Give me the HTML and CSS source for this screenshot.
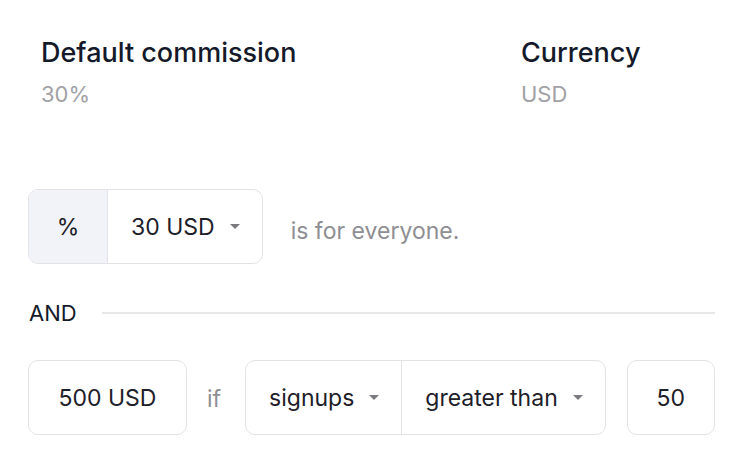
FILE: index.html
```html
<!DOCTYPE html>
<html lang="en">
<head>
  <meta charset="UTF-8">
  <title>Commission</title>
  <link rel="stylesheet" href="styles.css">
</head>
<body>
  <div class="page">
    <div class="summary">
      <div class="field">
        <div class="field-label">Default commission</div>
        <div class="field-value">30%</div>
      </div>
      <div class="field">
        <div class="field-label">Currency</div>
        <div class="field-value">USD</div>
      </div>
    </div>

    <div class="rule-row first">
      <div class="group">
        <div class="cell unit">%</div>
        <div class="cell select">30 USD <span class="caret"></span></div>
      </div>
      <span class="note">is for everyone.</span>
    </div>

    <div class="divider">
      <span class="divider-label">AND</span>
      <span class="divider-line"></span>
    </div>

    <div class="rule-row">
      <div class="group">
        <div class="cell amount">500 USD</div>
      </div>
      <span class="note if">if</span>
      <div class="group">
        <div class="cell select">signups <span class="caret"></span></div>
        <div class="cell select">greater than <span class="caret"></span></div>
      </div>
      <div class="group">
        <div class="cell number">50</div>
      </div>
    </div>
  </div>
</body>
</html>
```

FILE: styles.css
```css
body {
  margin: 0;
  background: #fff;
  font-family: Inter, "Noto Sans", sans-serif;
  color: #1f2023;
}

.page {
  padding: 34px 25px 0 28px;
}

.summary {
  display: grid;
  grid-template-columns: 480px 1fr;
  padding-left: 13px;
}

.field-label {
  font-size: 27px;
  font-weight: 500;
  color: #141a2a;
  line-height: 37px;
}

.field-value {
  margin-top: 9px;
  font-size: 22px;
  color: #a1a1a6;
  line-height: 28px;
}

.rule-row {
  display: flex;
  align-items: center;
  white-space: nowrap;
}

.rule-row.first {
  margin-top: 81px;
}

.group {
  display: flex;
  flex-shrink: 0;
  height: 73px;
  border: 1px solid #e3e3e6;
  border-radius: 10px;
  overflow: hidden;
}

.cell {
  display: flex;
  align-items: center;
  justify-content: center;
  font-size: 23px;
  color: #1e2029;
}

.cell + .cell {
  border-left: 1px solid #e3e3e6;
}

.unit {
  width: 78px;
  background: #f1f3f8;
}

.select {
  padding: 0 22px 0 23px;
}

.caret {
  width: 0;
  height: 0;
  margin-left: 15px;
  border-left: 5px solid transparent;
  border-right: 5px solid transparent;
  border-top: 5px solid #7a7a80;
}

.amount {
  width: 157px;
}

.number {
  width: 86px;
}

.note {
  font-size: 23px;
  color: #8e8e93;
  margin-left: 28px;
  padding-top: 8px;
}

.note.if {
  margin: 0 24px 0 20px;
  padding-top: 2px;
}

.rule-row .group:last-child {
  margin-left: 21px;
}

.divider {
  display: flex;
  align-items: center;
  margin: 26px 0 25px;
  height: 45px;
}

.divider-label {
  font-size: 22px;
  color: #141a2a;
  padding-left: 1px;
}

.divider-line {
  flex: 1;
  height: 2px;
  margin-left: 25px;
  background: #e8e8eb;
}
```
